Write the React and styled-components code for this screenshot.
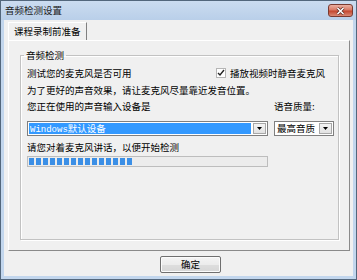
import React from 'react';
import styled, { createGlobalStyle } from 'styled-components';

const Global = createGlobalStyle`
  html, body { margin: 0; padding: 0; background: #fff; }
  body { font-family: "Noto Sans CJK SC", "Liberation Sans", sans-serif; }
`;

const Window = styled.div`
  width: 357px;
  height: 280px;
  box-sizing: border-box;
  border: 1px solid #53677c;
  background: #c2d6ed;
  display: flex;
  flex-direction: column;
  font-size: 9.5px;
  color: #000;
`;

const TitleBar = styled.div`
  height: 19px;
  flex: none;
  display: flex;
  justify-content: space-between;
  align-items: flex-start;
  padding: 3px 3px 0 4px;
  box-sizing: border-box;
  background: linear-gradient(#cbdcf0, #b9cfe9);
`;

const Title = styled.span`
  line-height: 13px;
  color: #1b1b1b;
`;

const CloseBtn = styled.div`
  width: 25px;
  height: 13px;
  box-sizing: border-box;
  border: 1px solid #7a3a30;
  border-radius: 3px;
  background: linear-gradient(#eab0a2, #d87a66 45%, #c4472f 55%, #d98a76);
  display: flex;
  align-items: center;
  justify-content: center;
`;

const Body = styled.div`
  flex: 1;
  margin: 0 3px 3px 3px;
  padding: 2px 3px 3px 4px;
  background: #f0f0f0;
  display: flex;
  flex-direction: column;
`;

const TabStrip = styled.div`
  display: flex;
  height: 18px;
`;

const Tab = styled.div`
  height: 18px;
  box-sizing: border-box;
  padding: 0 5px;
  line-height: 17px;
  border-top: 1px solid #fff;
  border-left: 1px solid #fff;
  border-right: 1px solid #808080;
`;

const Panel = styled.div`
  flex: 1;
  box-sizing: border-box;
  border-top: 1px solid #fff;
  border-left: 1px solid #fff;
  border-right: 1px solid #8a8a8a;
  border-bottom: 1px solid #8a8a8a;
  padding: 8px 10px 10px 11px;
  display: flex;
  flex-direction: column;
`;

const Group = styled.fieldset`
  flex: 1;
  margin: 0;
  padding: 4px 3px 0 6px;
  border: 1px solid #c2c2c2;
  box-shadow: inset 1px 1px 0 #fff, 1px 1px 0 #fff;
  min-width: 0;
`;

const Legend = styled.legend`
  padding: 0 2px;
  margin-left: -3px;
  line-height: 12px;
`;

const Grid = styled.div`
  display: grid;
  grid-template-columns: 241px 60px;
  column-gap: 6px;
  align-items: start;
`;

const Line = styled.div`
  line-height: 16.5px;
  white-space: nowrap;
  grid-column: ${({ $span }) => ($span ? '1 / -1' : 'auto')};
  margin-top: ${({ $mt }) => $mt || 0}px;
`;

const SpreadLine = styled(Line)`
  display: flex;
  justify-content: space-between;
  padding-right: 9px;
`;

const CheckWrap = styled.label`
  display: flex;
  align-items: center;
  gap: 4px;
`;

const Box = styled.span`
  width: 10px;
  height: 10px;
  box-sizing: border-box;
  border: 1px solid #b5b5b5;
  background: #fff;
  display: flex;
  align-items: center;
  justify-content: center;
`;

const Combo = styled.div`
  height: 15px;
  box-sizing: border-box;
  border: 1px solid #7f7f7f;
  background: #fff;
  display: flex;
  margin-top: 6px;
`;

const Field = styled.div`
  flex: 1;
  padding: 1px 2px 1px 1px;
  display: flex;
  min-width: 0;
`;

const Selected = styled.div`
  flex: 1;
  background: ${({ $active }) => ($active ? '#3399ff' : 'transparent')};
  color: ${({ $active }) => ($active ? '#fff' : '#000')};
  line-height: 11px;
  padding-left: 1px;
  white-space: nowrap;
`;

const Mono = styled.span`
  font-family: "Liberation Mono", monospace;
  font-size: 9px;
`;

const ArrowBtn = styled.div`
  width: 13px;
  flex: none;
  box-sizing: border-box;
  margin: 1px 1px 1px 0;
  border: 1px solid #a7a7a7;
  background: linear-gradient(#f4f4f4, #e2e2e2);
  display: flex;
  align-items: center;
  justify-content: center;
`;

const Progress = styled.div`
  height: 11px;
  box-sizing: border-box;
  border: 1px solid #bdbdbd;
  background: #ececec;
  padding: 1px;
  display: flex;
  gap: 2px;
  margin-top: 1px;
`;

const Block = styled.span`
  width: 5px;
  background: #3b8fe6;
`;

const ButtonRow = styled.div`
  display: flex;
  padding-left: 152px;
  margin-top: 5px;
`;

const Button = styled.button`
  width: 61px;
  height: 17px;
  box-sizing: border-box;
  padding: 0;
  border: 1px solid #6f6f6f;
  border-radius: 2px;
  background: linear-gradient(#f4f4f4, #ececec 50%, #dedede 51%, #d6d6d6);
  box-shadow: inset 0 0 0 1px #fbfbfb;
  font-family: inherit;
  font-size: 9.5px;
  color: #000;
  line-height: 15px;
`;

const Arrow = () => (
  <svg width="5" height="3" viewBox="0 0 5 3">
    <path d="M0 0h5L2.5 3z" fill="#000" />
  </svg>
);

export default function App() {
  const blocks = Array.from({ length: 15 });
  return (
    <>
      <Global />
      <Window>
        <TitleBar>
          <Title>音频检测设置</Title>
          <CloseBtn>
            <svg width="9" height="8" viewBox="0 0 9 8">
              <path d="M1.5 1l6 6M7.5 1l-6 6" stroke="#5a2a22" strokeWidth="3" />
              <path d="M1.5 1l6 6M7.5 1l-6 6" stroke="#fff" strokeWidth="1.6" />
            </svg>
          </CloseBtn>
        </TitleBar>
        <Body>
          <TabStrip>
            <Tab>课程录制前准备</Tab>
          </TabStrip>
          <Panel>
            <Group>
              <Legend>音频检测</Legend>
              <Grid>
                <SpreadLine $span>
                  <span>测试您的麦克风是否可用</span>
                  <CheckWrap>
                    <Box>
                      <svg width="8" height="8" viewBox="0 0 8 8">
                        <path d="M1 4l2 2 4-5" stroke="#222" strokeWidth="1.4" fill="none" />
                      </svg>
                    </Box>
                    播放视频时静音麦克风
                  </CheckWrap>
                </SpreadLine>
                <Line $span>为了更好的声音效果，请让麦克风尽量靠近发音位置。</Line>
                <Line>您正在使用的声音输入设备是</Line>
                <Line>语音质量:</Line>
                <Combo>
                  <Field>
                    <Selected $active>
                      <Mono>Windows</Mono>默认设备
                    </Selected>
                  </Field>
                  <ArrowBtn><Arrow /></ArrowBtn>
                </Combo>
                <Combo>
                  <Field>
                    <Selected>最高音质</Selected>
                  </Field>
                  <ArrowBtn><Arrow /></ArrowBtn>
                </Combo>
                <Line $mt={3}>请您对着麦克风讲话，以便开始检测</Line>
                <div />
                <Progress>
                  {blocks.map((_, i) => <Block key={i} />)}
                </Progress>
              </Grid>
            </Group>
          </Panel>
          <ButtonRow>
            <Button>确定</Button>
          </ButtonRow>
        </Body>
      </Window>
    </>
  );
}
